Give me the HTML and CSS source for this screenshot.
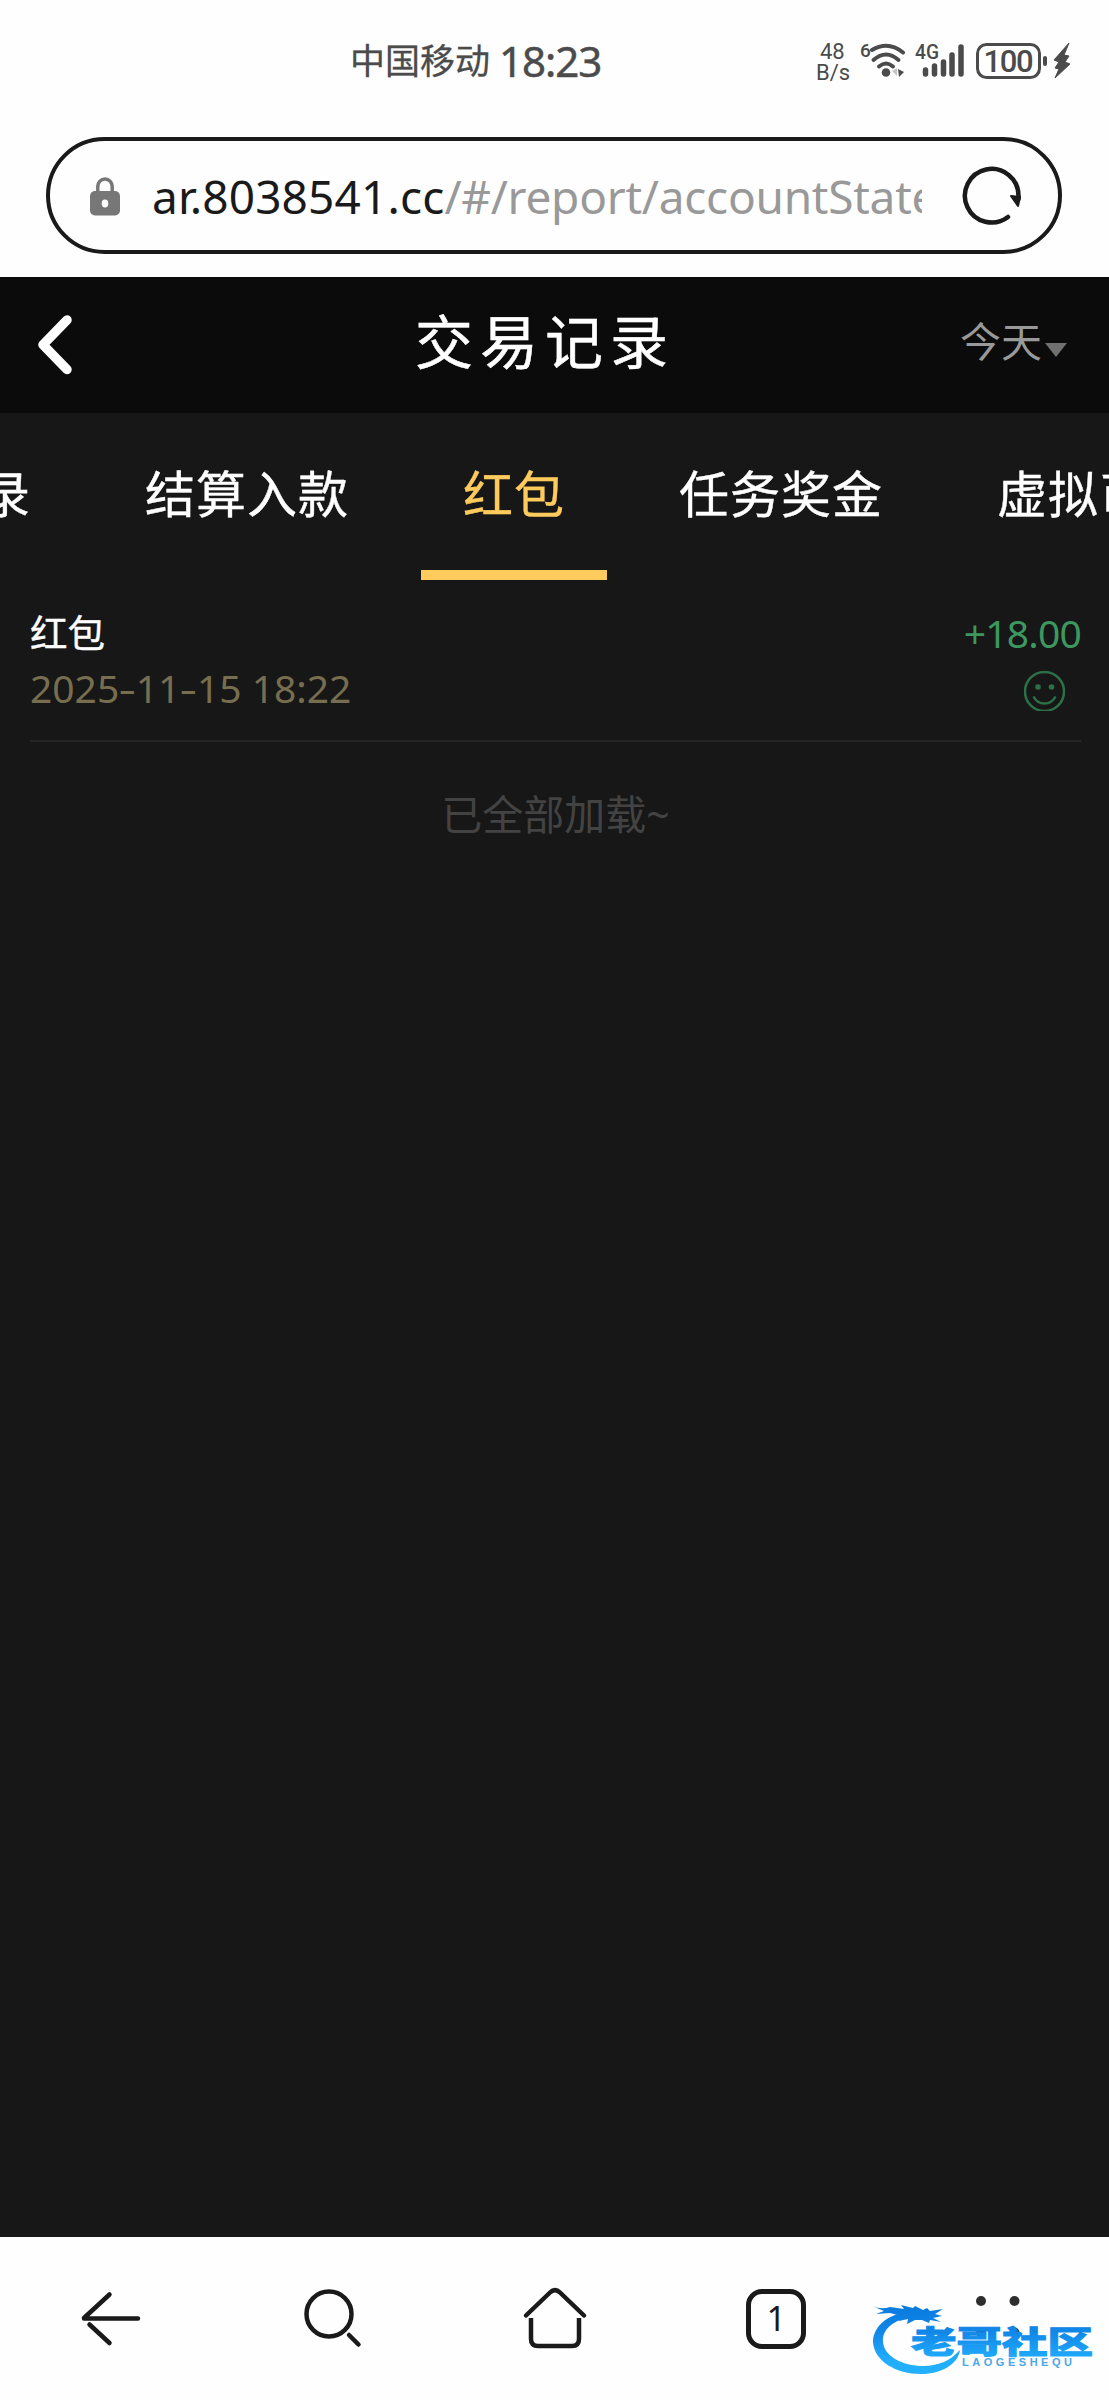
FILE: index.html
```html
<!DOCTYPE html>
<html lang="zh-CN">
<head>
    <meta charset="utf-8">
    <title>交易记录</title>
    <meta name="viewport" content="width=device-width, initial-scale=1">
    <link rel="stylesheet" href="styles.css">
</head>

<body>
    <div class="phone">
        <!-- status bar -->
        <div class="status">
            <span class="carrier">中国移动</span>
            <span class="time">18:23</span>
            <div class="speed"><span>48</span><span>B/s</span></div>
            <svg class="wifi" width="48" height="40" viewBox="0 0 48 40">
                <text class="mark" x="1" y="17" font-size="19" textLength="9">6</text>
                <g fill="none" stroke="#4b4b4b" stroke-width="4" stroke-linecap="round">
                    <path d="M13 10Q29 0.500 44 12.500"/>
                    <path d="M14.500 20Q27 9 39.500 20"/>
                    <path d="M20 26.500Q27 20.500 34 26.500"/>
                </g>
                <circle cx="27" cy="32.500" r="4.300" fill="#4b4b4b"/>
                <path d="M38 28v8l-5-5z" fill="#c4c4c4"/>
                <path d="M39 29l6 3-5 5z" fill="#4b4b4b"/>
            </svg>
            <svg class="signal" width="50" height="40" viewBox="0 0 50 40">
                <text class="mark" x="1" y="19" font-size="21" textLength="24" lengthAdjust="spacingAndGlyphs">4G</text>
                <g stroke="#4b4b4b" stroke-width="5.500" stroke-linecap="round">
                    <path d="M11.500 30v4M20.500 26v8M29.500 22v12M38 15v19M47 7v27"/>
                </g>
            </svg>
            <svg class="battery" width="96" height="40" viewBox="0 0 96 40">
                <rect x="1.500" y="4.500" width="62" height="33" rx="9" fill="none" stroke="#4b4b4b" stroke-width="3"/>
                <text class="mark" x="7.500" y="31.500" font-size="31" textLength="50">100</text>
                <rect x="67" y="16" width="4" height="10" rx="2" fill="#4b4b4b"/>
                <path d="M93 3L78 20l5 2-4 6 4 1-4 9 15-14-5-2 4-6-5-1z" fill="#4b4b4b" stroke="#4b4b4b" stroke-width="1"/>
            </svg>
        </div>

        <!-- address bar -->
        <div class="address">
            <svg width="30" height="40" viewBox="0 0 30 40">
                <path d="M7.800 16V10.500a7.200 7.600 0 0 1 14.400 0V16" fill="none" stroke="#777" stroke-width="3.500"/>
                <rect y="15" width="30" height="24.500" rx="5" fill="#777"/>
                <ellipse cx="15" cy="27.500" rx="3.300" ry="4" fill="#fff"/>
            </svg>
            <div class="url">ar.8038541.cc<span>/#/report/accountStatement</span></div>
            <svg width="60" height="60" viewBox="0 0 60 60">
                <path d="M47 51A26.800 26.800 0 1 1 57.500 30v3" fill="none" stroke="#1a1a1a" stroke-width="4.500" stroke-linecap="round"/>
                <path d="M50 30l9 1-2 9z" fill="#1a1a1a" stroke="#1a1a1a" stroke-width="2" stroke-linejoin="round"/>
            </svg>
        </div>

        <div class="header">
            <svg width="36" height="60" viewBox="0 0 36 60">
                <path d="M30 5L6 29.800 30 54.500" fill="none" stroke="#fff" stroke-width="9.500" stroke-linecap="round" stroke-linejoin="round"/>
            </svg>
            <h1>交易记录</h1>
            <div class="day">今天<i></i></div>
        </div>

        <div class="tabs">
            <div class="tab">充值记录</div>
            <div class="tab">结算入款</div>
            <div class="tab active">红包</div>
            <div class="tab">任务奖金</div>
            <div class="tab">虚拟币</div>
        </div>

        <div class="list">
            <div class="item">
                <div class="left">
                    <p class="name">红包</p>
                    <p class="date">2025<span>-</span>11<span>-</span>15 18:22</p>
                </div>
                <div class="right">
                    <p class="amount">+18.00</p>
                    <svg width="41" height="40" viewBox="0 0 41 40">
                        <circle cx="20.500" cy="20.500" r="19.500" fill="none" stroke="#2c7047" stroke-width="2.500"/>
                        <circle cx="14" cy="16" r="2.800" fill="#2c7047"/>
                        <circle cx="27.500" cy="16" r="2.800" fill="#2c7047"/>
                        <path d="M9.500 25.500Q13 32.500 20.500 32.500T31.500 25.500" fill="none" stroke="#2c7047" stroke-width="2.500"/>
                    </svg>
                </div>
            </div>
            <p class="end">已全部加载~</p>
        </div>

        <!-- browser toolbar -->
        <div class="toolbar">
            <svg width="66" height="66" viewBox="0 0 66 66">
                <path d="M6 33.500h54M6 33L31.500 9.500M11.500 39.500L31.500 58" />
            </svg>
            <svg width="66" height="66" viewBox="0 0 66 66">
                <circle cx="29" cy="29" r="22.500"/>
                <path d="M49 50l9.500 9.500"/>
            </svg>
            <svg width="66" height="66" viewBox="0 0 66 66">
                <path d="M4 30.500L28 7.500Q33 2.500 38 7.500L62 30.500"/>
                <path d="M9 33v21q0 7 7 7h34q7 0 7-7V33" stroke-linecap="butt"/>
            </svg>
            <div class="count">1</div>
            <svg class="dots" width="66" height="66" viewBox="0 0 66 66">
                <circle cx="16" cy="16" r="5"/>
                <circle cx="49.500" cy="16" r="5"/>
                <circle cx="16" cy="47.500" r="5"/>
                <circle cx="49.500" cy="47.500" r="5"/>
            </svg>

            <svg class="watermark" width="230" height="80" viewBox="0 0 230 80">
                <defs>
                    <linearGradient id="blue" x1="0" y1="0" x2="0" y2="80" gradientUnits="userSpaceOnUse">
                        <stop offset="0" stop-color="#0878dc"/>
                        <stop offset=".4" stop-color="#1187e8"/>
                        <stop offset=".75" stop-color="#20aefc"/>
                        <stop offset="1" stop-color="#25b2ff"/>
                    </linearGradient>
                </defs>
                <g fill="url(#blue)">
                    <path d="M28 14C11 19 3 31 3 42C4 61 26 74 51 74C72 74 88 64 90 50C80 61 68 66 53 66C32 66 14 56 13 42C12 30 22 21 38 18Z"/>
                    <path d="M2 6Q11 10 20 7L34 9 31 5 43 8 45 6 53 10 57 8 60 11 73 9 65 14 72 16 63 18 71 22 60 20 59 23 52 20 45 20 37 24 38 19 29 21 31 16 20 13 6 14 14 11Z"/>
                </g>
                <text class="cn" x="41" y="53" textLength="182" lengthAdjust="spacingAndGlyphs">老哥社区</text>
                <text class="en" x="92" y="66" textLength="110">LAOGESHEQU</text>
            </svg>
        </div>
    </div>
</body>
</html>
```

FILE: styles.css
```css
body {
	margin: 0;
	background: #fefefe;
	font-family: "Noto Sans", "Noto Sans CJK SC", sans-serif;
}

h1, p {
	margin: 0;
	font-weight: normal;
}

svg {
	flex: none;
}

.phone {
	width: 1109px;
	height: 2400px;
	display: flex;
	flex-direction: column;
	overflow: hidden;
}

/* status bar */
.status {
	height: 97px;
	padding: 40px 35px 0 350px;
	box-sizing: border-box;
	display: flex;
	align-items: flex-start;
	color: #4b4b4b;
	white-space: nowrap;
}

.carrier {
	flex: none;
	width: 149px;
	font-size: 35px;
	line-height: 42px;
	-webkit-text-stroke: .3px #4b4b4b;
}

.time {
	flex: none;
	width: 317px;
	font-size: 42px;
	line-height: 42px;
	letter-spacing: -1px;
	-webkit-text-stroke: .5px #4b4b4b;
}

.speed {
	flex: none;
	width: 43px;
	display: flex;
	flex-direction: column;
	padding-top: 1px;
	font-family: Roboto, sans-serif;
	font-size: 22px;
	line-height: 21px;
}

.speed span:first-child {
	padding-left: 4px;
}

.wifi {
	margin-right: 7px;
}

.signal {
	margin-right: 12px;
}

.mark {
	font-family: Roboto, sans-serif;
	font-weight: 500;
	fill: #4b4b4b;
}

/* address bar */
.address {
	width: 1016px;
	height: 117px;
	margin: 40px 0 23px 46px;
	padding: 0 37px 0 40px;
	box-sizing: border-box;
	border: 4px solid #1a1a1a;
	border-radius: 59px;
	display: flex;
	align-items: center;
}

.url {
	width: 770px;
	margin: 0 39px 0 32px;
	font-size: 46px;
	line-height: 66px;
	letter-spacing: .15px;
	color: #1a1a1a;
	white-space: nowrap;
	overflow: hidden;
}

.url span {
	color: #999;
	letter-spacing: -.25px;
}

/* page header */
.header {
	height: 136px;
	flex: none;
	background: #0b0b0b;
	display: flex;
	align-items: center;
	padding: 0 42px 0 37px;
}

.header h1 {
	flex: 1;
	padding-left: 57px;
	text-align: center;
	font-size: 58px;
	line-height: 80px;
	letter-spacing: 7px;
	padding-bottom: 7px;
	color: #fff;
	-webkit-text-stroke: .5px #fff;
}

.day {
	display: flex;
	align-items: center;
	font-size: 41px;
	line-height: 50px;
	color: #999;
	padding-bottom: 8px;
}

.day i {
	margin: 18px 0 0 3px;
	border: 11px solid transparent;
	border-top: 14px solid #707070;
	border-bottom: 0;
}

/* tabs, scrolled a bit to the left */
.tabs {
	height: 167px;
	flex: none;
	box-sizing: border-box;
	padding-right: 132px;
	background: #171717;
	display: flex;
	justify-content: center;
	gap: 30px;
	overflow: hidden;
	white-space: nowrap;
}

.tab {
	flex: none;
	padding: 51px 42px 0;
	height: 106px;
	font-size: 50px;
	line-height: 60px;
	letter-spacing: 1px;
	color: #fff;
	-webkit-text-stroke: .4px;
}

.tab.active {
	color: #fecb5c;
	border-bottom: 10px solid #fecb5c;
}

/* records */
.list {
	flex: 1;
	background: #171717;
	padding: 26px 28px 0 30px;
}

.item {
	display: flex;
	justify-content: space-between;
	height: 134px;
	border-bottom: 2px solid #262626;
}

.name {
	font-size: 37.5px;
	line-height: 54px;
	color: #fff;
	-webkit-text-stroke: .4px;
}

.date {
	font-size: 39px;
	line-height: 56px;
	color: #776e50;
}

/* wide dash between the date parts */
.date span {
	display: inline-block;
	margin: 0 2px;
	transform: scaleX(1.4);
}

.right {
	display: flex;
	flex-direction: column;
	align-items: flex-end;
}

.amount {
	font-size: 39px;
	line-height: 54px;
	letter-spacing: -.8px;
	color: #3d9860;
}

.right svg {
	margin: 11px 16px 0 0;
}

.end {
	margin-top: 46px;
	text-align: center;
	font-size: 41px;
	line-height: 52px;
	color: #434343;
}

/* browser toolbar */
.toolbar {
	position: relative;
	height: 163px;
	flex: none;
	box-sizing: border-box;
	padding: 48px 78px 0;
	display: flex;
	justify-content: space-between;
	align-items: flex-start;
	background: #fefefe;
}

.toolbar svg {
	fill: none;
	stroke: #1a1a1a;
	stroke-width: 4.5;
	stroke-linecap: round;
}

.count {
	width: 60px;
	height: 60px;
	margin: 4px 3px 0;
	box-sizing: border-box;
	border: 5px solid #1a1a1a;
	border-radius: 16px;
	text-align: center;
	font-size: 34px;
	line-height: 48px;
	color: #1a1a1a;
}

.toolbar .dots {
	fill: #2e2e2e;
	stroke: none;
}

.toolbar .watermark {
	position: absolute;
	left: 870px;
	top: 63px;
	stroke: none;
}

.watermark .cn {
	font-family: "Noto Sans CJK SC", sans-serif;
	font-size: 31px;
	font-weight: 900;
	fill: url(#blue);
	stroke: url(#blue);
	stroke-width: 1;
}

.watermark .en {
	font-family: "Liberation Sans", sans-serif;
	font-size: 11px;
	font-weight: bold;
	fill: #4aa8e8;
}
```
